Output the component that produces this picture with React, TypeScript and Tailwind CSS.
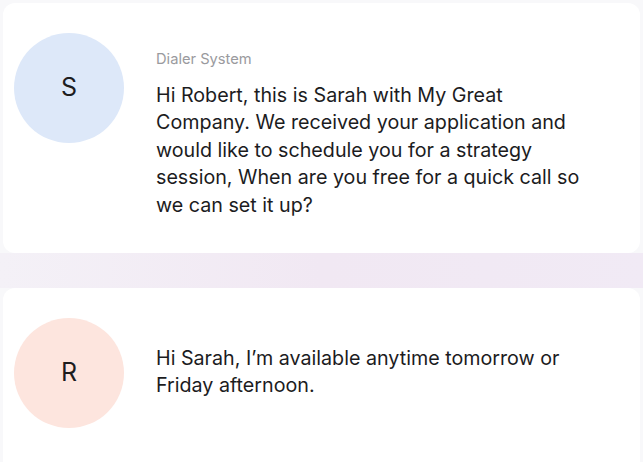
const font = { fontFamily: "Inter, 'Noto Sans', sans-serif" };

function Avatar({ letter, tone }: { letter: string; tone: string }) {
  return (
    <div
      className={`w-[110px] h-[110px] shrink-0 rounded-full flex items-center justify-center text-[25px] text-[#1d1d1f] ${tone}`}
    >
      {letter}
    </div>
  );
}

export default function App() {
  return (
    <main className="w-[643px] h-[462px] overflow-hidden bg-[#f8f8fa]" style={font}>
      {/* first message */}
      <div className="mx-[3px] mt-[3px] h-[250px] bg-white rounded-xl flex items-start pl-[11px] pt-[30px]">
        <Avatar letter="S" tone="bg-[#dde8f9]" />
        <div className="ml-[32px] pt-[16px] w-[430px]">
          <p className="text-[14.7px] leading-[20px] text-[#9a9a9e]">Dialer System</p>
          <p className="mt-[13px] text-[19.7px] leading-[27.4px] text-[#1c1c1e]">
            Hi Robert, this is Sarah with My Great Company. We received your application and would like to schedule you for a strategy session, When are you free for a quick call so we can set it up?
          </p>
        </div>
      </div>

      {/* divider band */}
      <div className="h-[35px] bg-gradient-to-r from-[#f4f1f7] via-[#f1e8f3] to-[#f1eaf5]" />

      {/* reply */}
      <div className="mx-[3px] h-[200px] bg-white rounded-t-xl flex items-start pl-[11px] pt-[30px]">
        <Avatar letter="R" tone="bg-[#fde5de]" />
        <div className="ml-[32px] pt-[27px] w-[430px]">
          <p className="text-[19.7px] leading-[27.4px] text-[#1c1c1e]">
            Hi Sarah, I’m available anytime tomorrow or Friday afternoon.
          </p>
        </div>
      </div>
    </main>
  );
}
